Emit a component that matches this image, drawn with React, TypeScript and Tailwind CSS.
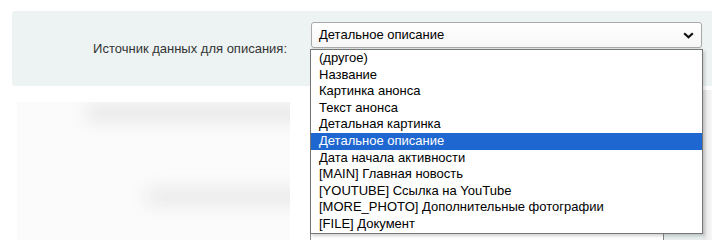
import React from "react";

const options = [
  "(другое)",
  "Название",
  "Картинка анонса",
  "Текст анонса",
  "Детальная картинка",
  "Детальное описание",
  "Дата начала активности",
  "[MAIN] Главная новость",
  "[YOUTUBE] Ссылка на YouTube",
  "[MORE_PHOTO] Дополнительные фотографии",
  "[FILE] Документ",
];

const selected = "Детальное описание";

const App: React.FC = () => {
  return (
    <div className="relative w-[712px] h-[240px] overflow-hidden bg-white font-['Liberation_Sans',Arial,sans-serif] text-[13px]">
      {/* settings row */}
      <div className="pt-[11px] pl-[12px]">
        <div className="flex h-[75px] bg-[#edf3f3] rounded-l-[3px]">
          <div className="w-[275px] flex items-center justify-end text-[#333] pt-[1px]">
            Источник данных для описания:
          </div>
          <div className="pl-[24px] pt-[11px]">
            <div className="relative w-[391px] h-[26px] flex items-center pl-[7px] border border-[#a9a9a9] rounded-[3px] bg-gradient-to-b from-white to-[#f6f6f6] text-black shadow-[0_1px_1px_rgba(0,0,0,0.08)]">
              Детальное описание
              <svg
                className="absolute right-[7px] top-[9px]"
                width="11"
                height="7"
                viewBox="0 0 11 7"
                fill="none"
              >
                <path d="M1.2 1.2 L5.5 5.3 L9.8 1.2" stroke="#111" strokeWidth="2.2" />
              </svg>
            </div>
          </div>
        </div>
      </div>

      {/* lower content under the list */}
      <div className="flex mt-[16px] h-[138px]">
        <div className="ml-[17px] w-[273px] bg-[#fbfbfb] flex flex-col pt-[4px] overflow-hidden">
          <div className="ml-[70px] mr-[-20px] h-[14px] bg-[#e3e3e3] blur-[9px]" />
          <div className="ml-[130px] mr-[-20px] mt-[70px] h-[14px] bg-[#e5e5e5] blur-[9px]" />
        </div>
        <div className="ml-[20px] flex-1 flex items-end">
          <div className="flex w-full h-[10px] border-l border-[#8a8a8a]">
            <div className="w-[352px] bg-white" />
            <div className="w-[40px] border-l border-[#888] bg-[#e6eded]" />
            <div className="flex-1 bg-[#f2f2f2]" />
          </div>
        </div>
      </div>
      <div className="absolute left-[703px] top-[90px] w-[9px] h-[150px] bg-gradient-to-r from-[#e4e4e4] to-[#f7f7f7]" />

      {/* opened dropdown list */}
      <div className="absolute left-[310px] top-[49px] w-[393px] border border-[#767676] bg-white shadow-[2px_2px_3px_rgba(0,0,0,0.18)]">
        {options.map((o) => (
          <div
            key={o}
            className={
              o === selected
                ? "h-[16.6px] leading-[16.6px] pl-[8px] bg-[#1e66d0] text-white"
                : "h-[16.6px] leading-[16.6px] pl-[8px] text-black"
            }
          >
            {o}
          </div>
        ))}
      </div>
    </div>
  );
};

export default App;
